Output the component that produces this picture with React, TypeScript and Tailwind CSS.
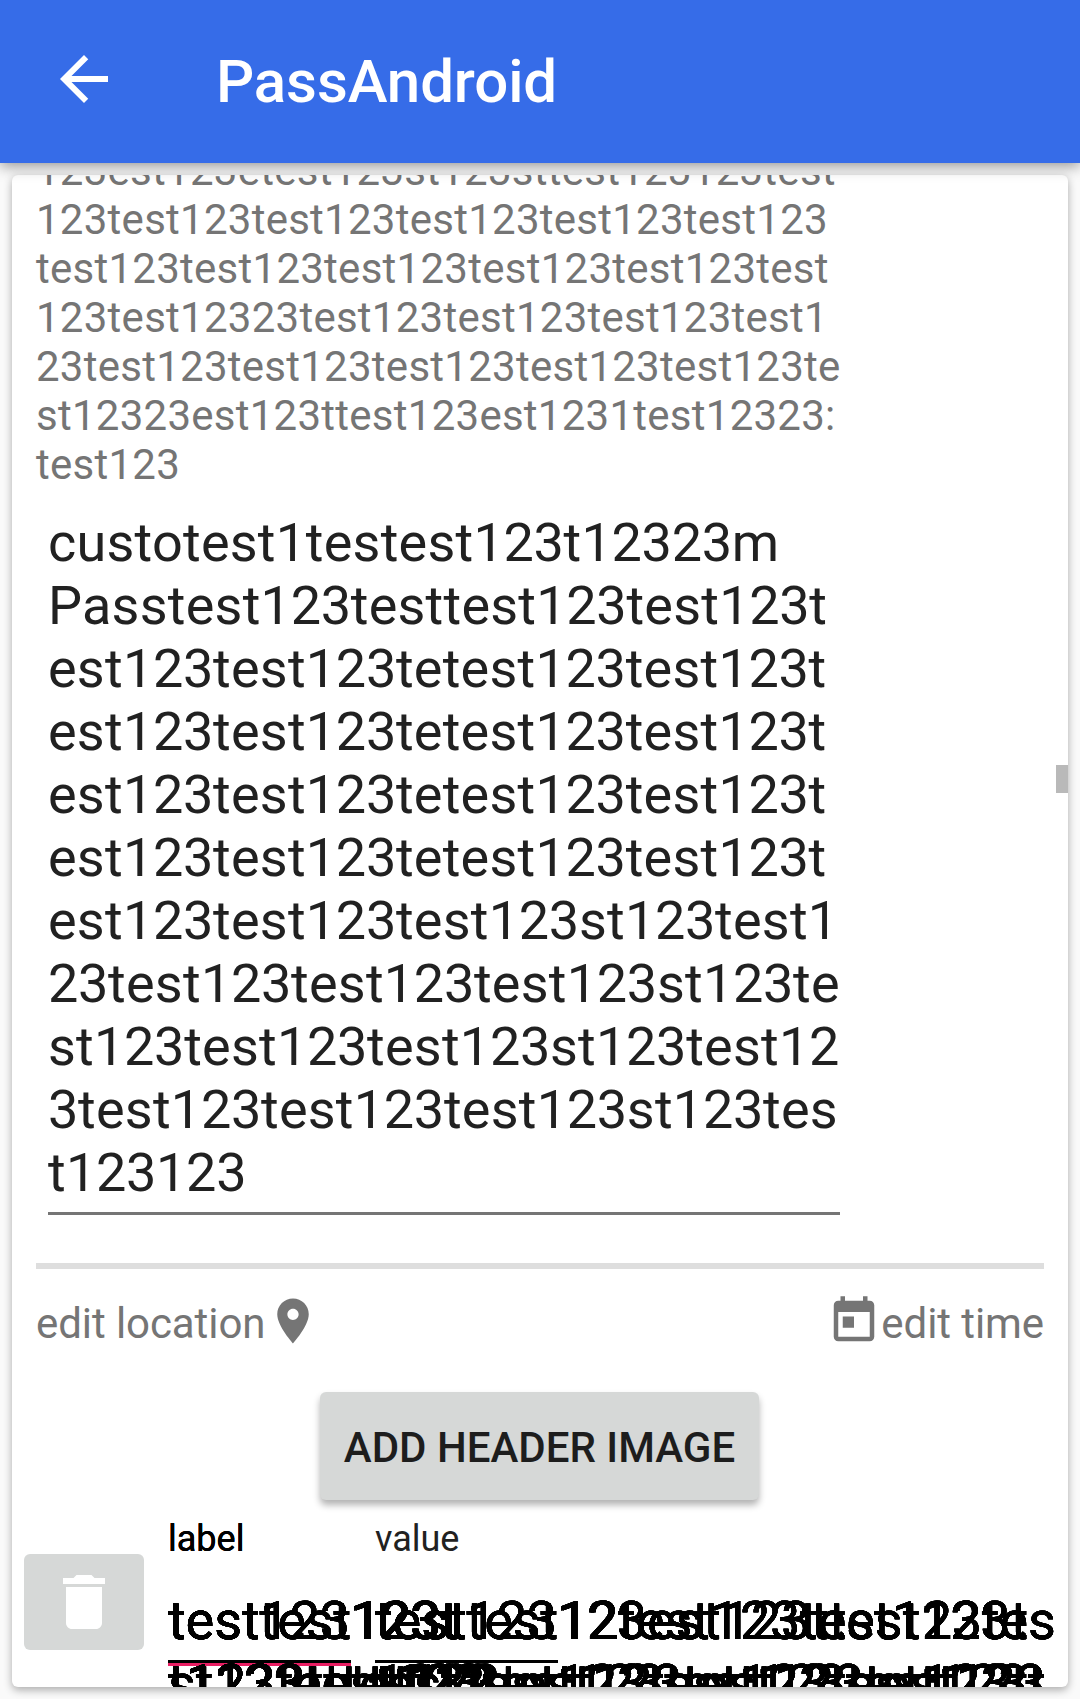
const hintLines = [
  '123est123etest123st123sttest123123test',
  '123test123test123test123test123test123',
  'test123test123test123test123test123test',
  '123test12323test123test123test123test1',
  '23test123test123test123test123test123te',
  'st12323est123ttest123est1231test12323:',
  'test123',
];

const descriptionLines = [
  'custotest1testest123t12323m',
  'Passtest123testtest123test123t',
  'est123test123tetest123test123t',
  'est123test123tetest123test123t',
  'est123test123tetest123test123t',
  'est123test123tetest123test123t',
  'est123test123test123st123test1',
  '23test123test123test123st123te',
  'st123test123test123st123test12',
  '3test123test123test123st123tes',
  't123123',
];

// Each entry is one overlapping field; every field shows two wrapped lines.
const labelFields = [
  ['testtest123t', 'st123test123'],
  ['test123123t', 't123testtest1'],
  ['', 't1233tttest12'],
];

const valueFields = [
  ['testtest12test123test123tes', '123test123test123test123t'],
  ['test123123est123ttest123t', 't123test123test123test123t'],
  ['', 'tt123test123test123test123'],
];

// Digits are set slightly tighter than letters at the large text size.
function LargeText({ text }: { text: string }) {
  return (
    <>
      {text.split(/(\d+)/).map((run, i) =>
        /^\d/.test(run) ? (
          <span key={i} className="tracking-[-0.3px]">
            {run}
          </span>
        ) : (
          run
        ),
      )}
    </>
  );
}

function Field({ lines }: { lines: string[] }) {
  return (
    <div className="absolute left-0 top-0 whitespace-pre text-[54px] leading-[63px] tracking-[-0.06px] text-black [text-shadow:0_0_0_#000,0_0_0_#000,0_0_0_#000,0_0_0_#000,0_0_0_#000]">
      {lines.map((line, i) => (
        <div key={i} className="h-[63px]">
          <LargeText text={line} />
        </div>
      ))}
    </div>
  );
}

export default function App() {
  return (
    <div className="flex h-[1699px] w-[1080px] flex-col overflow-hidden bg-[#fafafa] font-[Roboto,sans-serif]">
      <header className="z-10 flex h-[163px] shrink-0 items-start bg-[#366ce8] pl-12 text-white shadow-[0_3px_14px_rgba(0,0,0,0.42)]">
        <svg viewBox="0 0 24 24" className="mt-[43px] size-[72px]" fill="currentColor">
          <path d="M20 11H7.83l5.59-5.59L12 4l-8 8 8 8 1.41-1.41L7.83 13H20v-2z" />
        </svg>
        <h1 className="ml-24 mt-[47px] text-[60px] font-medium leading-[70px] tracking-[-0.1px]">PassAndroid</h1>
      </header>

      <main className="relative mx-3 mt-3 h-[1512px] shrink-0 overflow-hidden rounded-[6px] bg-white shadow-[0_3px_8px_rgba(0,0,0,0.32)]">
        <div className="-mt-[29px] px-6">
          <div className="whitespace-nowrap text-[42px] leading-[49px] tracking-[0.26px] text-[#757575]">
            {hintLines.map((line, i) => (
              <div key={i}>{line}</div>
            ))}
          </div>

          <div className="ml-3 mt-[22px] h-[704px] w-[792px] whitespace-nowrap border-b-[3px] border-[#757575] text-[54px] leading-[63px] tracking-[0.23px] text-[#212121]">
            {descriptionLines.map((line, i) => (
              <div key={i}>
                <LargeText text={line} />
              </div>
            ))}
          </div>

          <div className="mt-12 h-1.5 bg-[#dedede]" />

          <div className="mt-[25px] flex justify-between text-[42px] leading-[54px] tracking-[-0.08px] text-[#757575]">
            <div className="flex gap-px">
              <span className="pt-[3px]">edit location</span>
              <svg viewBox="0 0 24 24" className="size-[54px]" fill="currentColor">
                <path d="M12 2C8.13 2 5 5.13 5 9c0 5.25 7 13 7 13s7-7.75 7-13c0-3.87-3.13-7-7-7zm0 9.5c-1.38 0-2.5-1.12-2.5-2.5s1.12-2.5 2.5-2.5 2.5 1.12 2.5 2.5-1.12 2.5-2.5 2.5z" />
              </svg>
            </div>
            <div className="flex">
              <svg viewBox="0 0 24 24" className="size-[54px]" fill="currentColor">
                <path d="M19 3h-1V1h-2v2H8V1H6v2H5c-1.11 0-1.99.9-1.99 2L3 19c0 1.1.89 2 2 2h14c1.1 0 2-.9 2-2V5c0-1.1-.9-2-2-2zm0 16H5V8h14v11zM7 10h5v5H7z" />
              </svg>
              <span className="pt-[3px]">edit time</span>
            </div>
          </div>
        </div>

        <button className="ml-[308px] mt-[41px] block h-[108px] w-[439px] rounded-[6px] bg-[#d6d8d7] pt-[2px] text-[42px] font-medium leading-[49px] text-[#1d1d1d] shadow-[0_5px_7px_rgba(0,0,0,0.3)]">
          ADD HEADER IMAGE
        </button>

        <div className="flex pl-3 pt-4">
          <button className="mt-[38px] flex h-24 w-[120px] items-center justify-center rounded-[6px] bg-[#d6d8d7] text-white">
            <svg viewBox="0 0 24 24" className="size-[72px]" fill="currentColor">
              <path d="M6 19c0 1.1.9 2 2 2h8c1.1 0 2-.9 2-2V7H6v12zM19 4h-3.5l-1-1h-5l-1 1H5v2h14V4z" />
            </svg>
          </button>
          <div className="ml-6 w-[183px]">
            <div className="pt-[2px] text-[36px] leading-[42px] text-black [text-shadow:0_0_0_#000,0_0_0_#000]">label</div>
            <div className="relative mt-[29px] h-[77px] border-b-[6px] border-[#e91e63]">
              <div className="absolute -bottom-[3px] left-0 h-[3px] w-full bg-black" />
              {labelFields.map((lines, i) => (
                <Field key={i} lines={lines} />
              ))}
            </div>
          </div>
          <div className="ml-6 w-[183px]">
            <div className="pt-[2px] text-[36px] leading-[42px] text-[#212121]">value</div>
            <div className="relative mt-[29px] h-[74px] border-b-[3px] border-black">
              {valueFields.map((lines, i) => (
                <Field key={i} lines={lines} />
              ))}
            </div>
          </div>
        </div>

        <div className="absolute right-0 top-[590px] h-7 w-3 bg-[#b9b9b9]" />
      </main>
    </div>
  );
}
